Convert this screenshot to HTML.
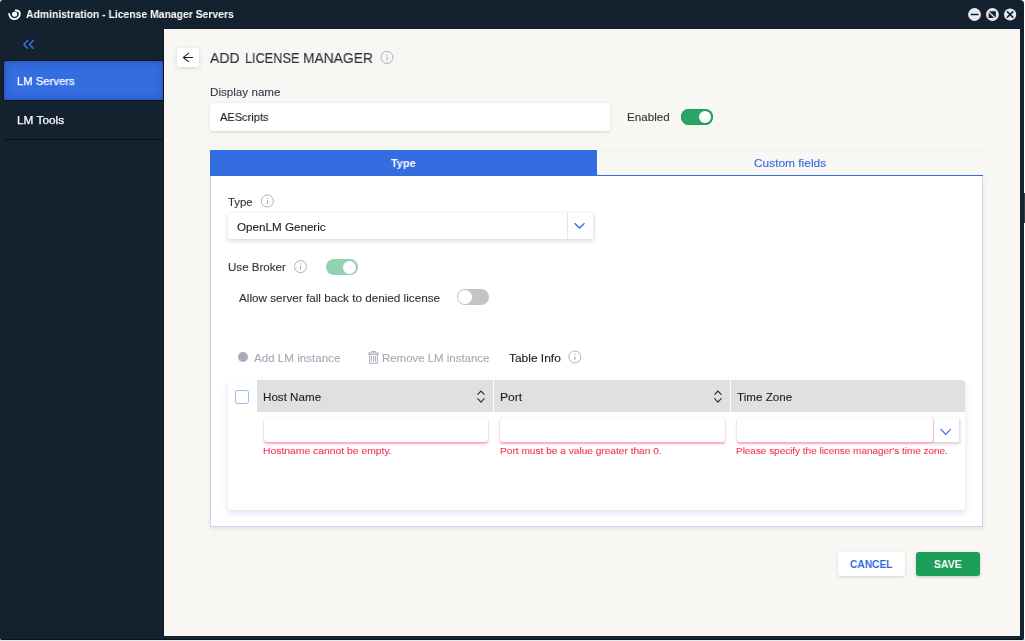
<!DOCTYPE html>
<html lang="en"><head><meta charset="utf-8"><title>Administration - License Manager Servers</title>
<style>
*{box-sizing:border-box;margin:0;padding:0}
html,body{width:1025px;height:641px;overflow:hidden;background:#fff}
body{position:relative;font-family:"Liberation Sans",Arial,sans-serif;}
.a{position:absolute}
.t{will-change:transform;position:absolute;white-space:nowrap;transform-origin:0 50%;font-family:"Liberation Sans",Arial,sans-serif}
.win{left:0;top:0;width:1023.8px;height:639.7px;background:#14212f;border-radius:3px 4px 2.5px 2.5px;box-shadow:inset 0 -1px 0 #0c1520}
.main{left:164.2px;top:28.5px;width:856px;height:607.5px;background:#f9f7f4}
.sbact{left:4px;top:60.8px;width:159.1px;height:39px;background:#346de0;box-shadow:inset 0 0 7px rgba(10,30,100,.4),0 0 0 1px #0d141c}
.sbline{left:4px;top:139px;width:159.2px;height:1.1px;background:#0b1016}
.back{left:177px;top:48px;width:22.2px;height:19px;background:#fff;border-radius:3px;box-shadow:0 1px 4px rgba(60,60,80,.2)}
.inp{background:#fff;border-radius:3px;box-shadow:0 1px 3px rgba(60,60,90,.19)}
.tog{width:32px;height:16px;border-radius:8px}
.tog i{position:absolute;top:2px;width:12px;height:12px;border-radius:50%;background:#fff}
.tabbar{left:210px;top:149.6px;width:773px;height:26.2px;background:#f9f7f4;border-top:1px solid #f0eeeb;border-bottom:1.1px solid #346de0;border-radius:3px 3px 0 0}
.tab1{left:210px;top:149.8px;width:386.8px;height:26px;background:#346de0}
.panel{left:210px;top:175.8px;width:773px;height:350.8px;background:#fff;border:1px solid #c9d5f7;border-top:none;box-shadow:0 2px 4px rgba(40,40,60,.09)}
.tbl{left:228px;top:380px;width:737px;height:129.5px;background:#fff;border-radius:4px;box-shadow:0 3px 6px rgba(90,110,180,.2)}
.th{left:257px;top:380px;width:708px;height:32px;background:#e0e0e0;border-radius:0 4px 0 0}
.vd{top:380px;width:1.2px;height:32px;background:#fff}
.chk{left:235px;top:390.2px;width:13.8px;height:13.6px;border:1px solid #98baee;border-radius:2.5px;background:#fff}
.einp{background:#fff;border-radius:3px;box-shadow:0 0 2.5px rgba(255,80,110,.16),0 1.3px 2px rgba(248,50,95,.42)}
.btn{top:552px;height:24px;border-radius:3px}

</style></head><body>
<div class="a" style="left:0;top:639px;width:1025px;height:2px;background:#e8e8e8"></div>
<div class="a win"></div>
<div class="a" style="left:1023.8px;top:193px;width:1.2px;height:29.5px;background:#3a3d42"></div>
<div class="a" style="left:163.1px;top:28.5px;width:1.2px;height:607.5px;background:#0e151e"></div>
<div class="a main"></div>
<!-- title icon -->
<svg class="a" style="left:6px;top:6px" width="18" height="18" viewBox="6 6 18 18">
  <rect x="12" y="11.8" width="5.2" height="4.9" rx="2.3" fill="#fff"/>
  <path d="M15.7 10.5 C18.2 10.4 19.8 11.8 19.8 13.6 A5.3 5.3 0 0 1 9.2 14.0" fill="none" stroke="#fff" stroke-width="1.9" stroke-linecap="round"/>
</svg>
<!-- window buttons -->
<svg class="a" style="left:966px;top:6px" width="54" height="18" viewBox="966 6 54 18">
  <circle cx="974.5" cy="14.5" r="6.4" fill="#e7e9ec"/>
  <rect x="970.7" y="13.75" width="7.8" height="1.5" fill="#14212f"/>
  <circle cx="992.4" cy="14.5" r="6.4" fill="#e7e9ec"/>
  <path d="M989.0 11.2 h6.9 v6.6 z M988.6 12.5 v5.5 h5.6 z" fill="#14212f"/>
  <circle cx="1010.1" cy="14.5" r="6.1" fill="#e7e9ec"/>
  <path d="M1007 11.4 L1013.2 17.6 M1013.2 11.4 L1007 17.6" stroke="#14212f" stroke-width="1.5" fill="none"/>
</svg>
<!-- sidebar -->
<svg class="a" style="left:22px;top:38px" width="14" height="12" viewBox="22 38 14 12">
  <path d="M28 40.3 L23.8 44.5 L28 48.7 M33.6 40.3 L29.4 44.5 L33.6 48.7" fill="none" stroke="#3b78ea" stroke-width="1.3"/>
</svg>
<div class="a sbact"></div>
<div class="a sbline"></div>
<!-- header -->
<div class="a back"></div>
<svg class="a" style="left:181px;top:51px" width="14" height="13" viewBox="181 51 14 13">
  <path d="M183 57.4 H193 M188.9 52.9 L183.3 57.4 L188.9 61.9" fill="none" stroke="#1c1c1c" stroke-width="1.05"/>
</svg>
<svg class="a" style="left:379px;top:49px" width="16" height="16" viewBox="379 49 16 16"><circle cx="387.0" cy="57.4" r="6" fill="none" stroke="#9fa5b5" stroke-width="0.85"/><path d="M387.0 56.6 V60.4 M387.0 54.2 V55.4" stroke="#a9afc0" stroke-width="1.1"/></svg>
<div class="a inp" style="left:210px;top:103.2px;width:399.5px;height:27.8px"></div>
<div class="a tog" style="left:681px;top:108.9px;background:#29a665;box-shadow:inset 0 0 0 1px #1f9d58"><i style="left:17.6px;top:1.9px;width:12.2px;height:12.2px"></i></div>
<!-- tabs / panel -->
<div class="a panel"></div>
<div class="a tabbar"></div>
<div class="a tab1"></div>
<svg class="a" style="left:259px;top:193px" width="16" height="16" viewBox="259 193 16 16"><circle cx="267.4" cy="201.0" r="6" fill="none" stroke="#9fa5b5" stroke-width="0.85"/><path d="M267.4 200.2 V204.0 M267.4 197.8 V199.0" stroke="#a9afc0" stroke-width="1.1"/></svg>
<div class="a inp" style="left:228px;top:213px;width:365.1px;height:26px;border-radius:1px;box-shadow:0.5px 1.5px 4.5px rgba(60,60,90,.2)"></div>
<div class="a" style="left:567px;top:213px;width:1px;height:26px;background:#dde6f5"></div>
<svg class="a" style="left:572px;top:220px" width="16" height="12" viewBox="572 220 16 12">
  <path d="M574.6 223.2 L579.55 228.05 L584.5 223.2" fill="none" stroke="#316be0" stroke-width="1.2"/>
</svg>
<svg class="a" style="left:292px;top:258px" width="16" height="16" viewBox="292 258 16 16"><circle cx="300.5" cy="266.6" r="6" fill="none" stroke="#9fa5b5" stroke-width="0.85"/><path d="M300.5 265.8 V269.6 M300.5 263.4 V264.6" stroke="#a9afc0" stroke-width="1.1"/></svg>
<div class="a tog" style="left:326px;top:258.9px;background:#93d2ae"><i style="left:17.3px;top:1.8px;width:13px;height:13px"></i></div>
<div class="a tog" style="left:457px;top:289px;background:#c4c4c4"><i style="left:1.3px;top:1.3px;width:13.4px;height:13.4px"></i></div>
<!-- toolbar -->
<div class="a" style="left:238.1px;top:352.3px;width:10px;height:10px;border-radius:50%;background:#a6adb9"></div>
<svg class="a" style="left:366px;top:349px" width="15" height="17" viewBox="366 349 15 17">
  <path d="M371.5 352.4 V351.5 H375.6 V352.4 M368.7 352.9 H378.3 V354.4 H368.7 Z M369.7 354.6 V363.3 H377.4 V354.6 M371.4 356 V361.8 M373.5 356 V361.8 M375.5 356 V361.8" fill="none" stroke="#a6acba" stroke-width="0.95"/>
</svg>
<svg class="a" style="left:566px;top:349px" width="16" height="16" viewBox="566 349 16 16"><circle cx="574.8" cy="357.0" r="6" fill="none" stroke="#9fa5b5" stroke-width="0.85"/><path d="M574.8 356.2 V360.0 M574.8 353.8 V355.0" stroke="#a9afc0" stroke-width="1.1"/></svg>
<!-- table -->
<div class="a tbl"></div>
<div class="a th"></div>
<div class="a vd" style="left:492.9px"></div>
<div class="a vd" style="left:729.9px"></div>
<div class="a chk"></div>
<svg class="a" style="left:476px;top:389px" width="10" height="16" viewBox="476 389 10 16">
  <path d="M477.5 394.7 L481 391 L484.5 394.7 M477.5 398.4 L481 402.1 L484.5 398.4" fill="none" stroke="#2e2e2e" stroke-width="1.15"/>
</svg>
<svg class="a" style="left:713px;top:389px" width="10" height="16" viewBox="713 389 10 16">
  <path d="M714.4 394.7 L717.9 391 L721.4 394.7 M714.4 398.4 L717.9 402.1 L721.4 398.4" fill="none" stroke="#2e2e2e" stroke-width="1.15"/>
</svg>
<div class="a einp" style="left:263.5px;top:418px;width:224px;height:24px"></div>
<div class="a einp" style="left:499.5px;top:418px;width:225px;height:24px"></div>
<div class="a" style="left:932px;top:418px;width:27px;height:23.8px;background:#fff;border-radius:0 1px 1px 0;box-shadow:0.5px 1.5px 3px rgba(60,60,90,.24)"></div>
<div class="a" style="left:933.2px;top:418px;width:0.8px;height:23.8px;background:#dfe8f6"></div>
<div class="a einp" style="left:736.5px;top:418px;width:196.3px;height:24px"></div>
<svg class="a" style="left:938px;top:426px" width="16" height="12" viewBox="938 426 16 12">
  <path d="M940.7 429.2 L945.7 434.3 L950.8 429.2" fill="none" stroke="#316be0" stroke-width="1.2"/>
</svg>
<!-- buttons -->
<div class="a btn" style="left:838px;width:67px;background:#fff;box-shadow:0 1px 3px rgba(60,60,90,.2)"></div>
<div class="a btn" style="left:916px;width:64px;background:#1c9f58;box-shadow:0 1px 3px rgba(20,100,60,.3)"></div>

<div class="t" style="left:26.37px;top:9px;font-size:11.3px;line-height:11.3px;color:#ffffff;font-weight:bold;transform:scaleX(0.9195)">Administration - License Manager Servers</div>
<div class="t" style="left:16.85px;top:76px;font-size:11.4px;line-height:11.4px;color:#ffffff;font-weight:normal;-webkit-text-stroke:0.25px;transform:scaleX(0.9895)">LM Servers</div>
<div class="t" style="left:16.71px;top:115px;font-size:11.4px;line-height:11.4px;color:#ffffff;font-weight:normal;-webkit-text-stroke:0.25px;transform:scaleX(1.0388)">LM Tools</div>
<h1 class="a" style="left:0;top:0;font-weight:normal;font-size:15px"><span class="t" style="left:210.39px;top:50px;font-size:15px;line-height:15px;color:#2b303a;font-weight:normal;-webkit-text-stroke:0.12px;transform:scaleX(0.9351)">ADD</span> <span class="t" style="left:244.56px;top:50px;font-size:15px;line-height:15px;color:#2b303a;font-weight:normal;-webkit-text-stroke:0.12px;transform:scaleX(0.8475)">LICENSE</span> <span class="t" style="left:303.47px;top:50px;font-size:15px;line-height:15px;color:#2b303a;font-weight:normal;-webkit-text-stroke:0.12px;transform:scaleX(0.9219)">MANAGER</span></h1>
<div class="t" style="left:210.45px;top:87px;font-size:11.4px;line-height:11.4px;color:#363b45;font-weight:normal;-webkit-text-stroke:0.12px;transform:scaleX(1.0220)">Display name</div>
<div class="t" style="left:219.50px;top:112px;font-size:11.4px;line-height:11.4px;color:#1c1c1c;font-weight:normal;-webkit-text-stroke:0.12px;transform:scaleX(0.9695)">AEScripts</div>
<div class="t" style="left:626.76px;top:112px;font-size:11.4px;line-height:11.4px;color:#333;font-weight:normal;-webkit-text-stroke:0.12px;transform:scaleX(1.0211)">Enabled</div>
<div class="t" style="left:390.86px;top:158px;font-size:11.4px;line-height:11.4px;color:#ffffff;font-weight:bold;transform:scaleX(0.9590)">Type</div>
<div class="t" style="left:753.82px;top:158px;font-size:11.4px;line-height:11.4px;color:#316be0;font-weight:normal;-webkit-text-stroke:0.12px;transform:scaleX(1.0449)">Custom fields</div>
<div class="t" style="left:228.48px;top:197px;font-size:11.4px;line-height:11.4px;color:#333;font-weight:normal;-webkit-text-stroke:0.12px;transform:scaleX(0.9967)">Type</div>
<div class="t" style="left:236.66px;top:222px;font-size:11.4px;line-height:11.4px;color:#1c1c1c;font-weight:normal;-webkit-text-stroke:0.12px;transform:scaleX(1.0220)">OpenLM Generic</div>
<div class="t" style="left:228.02px;top:262px;font-size:11.4px;line-height:11.4px;color:#333;font-weight:normal;-webkit-text-stroke:0.12px;transform:scaleX(1.0158)">Use Broker</div>
<div class="t" style="left:239.29px;top:293px;font-size:11.4px;line-height:11.4px;color:#333;font-weight:normal;-webkit-text-stroke:0.12px;transform:scaleX(1.0277)">Allow server fall back to denied license</div>
<div class="t" style="left:253.89px;top:353px;font-size:11.4px;line-height:11.4px;color:#a3a9b6;font-weight:normal;-webkit-text-stroke:0.12px;transform:scaleX(1.0179)">Add LM instance</div>
<div class="t" style="left:381.77px;top:353px;font-size:11.4px;line-height:11.4px;color:#a3a9b6;font-weight:normal;-webkit-text-stroke:0.12px;transform:scaleX(1.0037)">Remove LM instance</div>
<div class="t" style="left:508.86px;top:353px;font-size:11.4px;line-height:11.4px;color:#222;font-weight:normal;-webkit-text-stroke:0.12px;transform:scaleX(1.0480)">Table Info</div>
<div class="t" style="left:263.46px;top:392px;font-size:11.4px;line-height:11.4px;color:#222;font-weight:normal;-webkit-text-stroke:0.12px;transform:scaleX(1.0196)">Host Name</div>
<div class="t" style="left:499.92px;top:392px;font-size:11.4px;line-height:11.4px;color:#222;font-weight:normal;-webkit-text-stroke:0.12px;transform:scaleX(1.0579)">Port</div>
<div class="t" style="left:736.87px;top:392px;font-size:11.4px;line-height:11.4px;color:#222;font-weight:normal;-webkit-text-stroke:0.12px;transform:scaleX(1.0204)">Time Zone</div>
<div class="t" style="left:263.05px;top:446px;font-size:9.7px;line-height:9.7px;color:#f5365c;font-weight:normal;-webkit-text-stroke:0.12px;transform:scaleX(1.0690)">Hostname cannot be empty.</div>
<div class="t" style="left:499.96px;top:446px;font-size:9.7px;line-height:9.7px;color:#f5365c;font-weight:normal;-webkit-text-stroke:0.12px;transform:scaleX(1.0458)">Port must be a value greater than 0.</div>
<div class="t" style="left:736.38px;top:446px;font-size:9.7px;line-height:9.7px;color:#f5365c;font-weight:normal;-webkit-text-stroke:0.12px;transform:scaleX(1.0259)">Please specify the license manager&#39;s time zone.</div>
<div class="t" style="left:850.21px;top:559px;font-size:11px;line-height:11px;color:#2f66dd;font-weight:bold;transform:scaleX(0.9299)">CANCEL</div>
<div class="t" style="left:934.01px;top:559px;font-size:11px;line-height:11px;color:#ffffff;font-weight:bold;transform:scaleX(0.9527)">SAVE</div>
</body></html>
